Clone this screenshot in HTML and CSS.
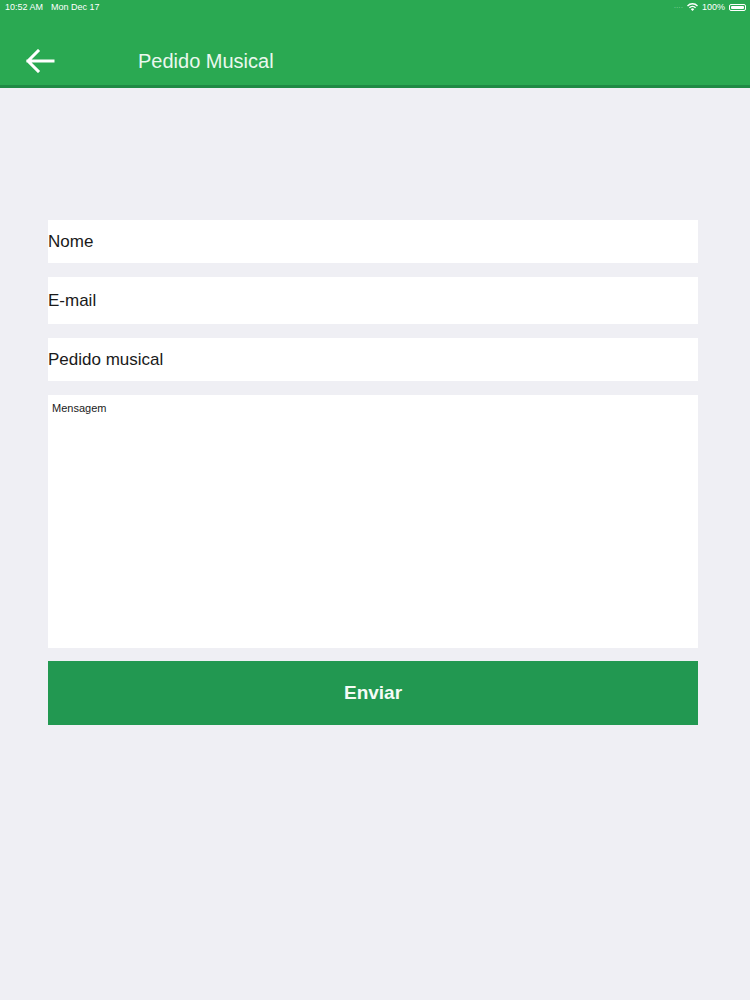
FILE: index.html
```html
<!DOCTYPE html>
<html lang="pt">
<head>
<meta charset="utf-8">
<title>Pedido Musical</title>
<link rel="stylesheet" href="styles.css">
</head>
<body>
<div class="app">
  <header class="header">
    <div class="status">
      <div class="status-left"><span>10:52 AM</span><span>Mon Dec 17</span></div>
      <div class="status-right">
        <span class="dots">····</span>
        <svg class="wifi" width="11" height="8" viewBox="0 0 11 8"><path d="M5.5 8 L3.8 6.2 A2.4 2.4 0 0 1 7.2 6.2 Z M1.9 4.3 A5 5 0 0 1 9.1 4.3 L8.1 5.3 A3.6 3.6 0 0 0 2.9 5.3 Z M0 2.4 A7.7 7.7 0 0 1 11 2.4 L10 3.4 A6.3 6.3 0 0 0 1 3.4 Z" fill="#fff"/></svg>
        <span>100%</span>
        <span class="battery"><span class="battery-fill"></span></span>
      </div>
    </div>
    <div class="nav">
      <svg class="back" width="30" height="24" viewBox="0 0 30 24"><path d="M28 12 H3 M13 2 L3 12 L13 22" fill="none" stroke="#fff" stroke-width="3" stroke-linecap="square"/></svg>
      <h1 class="title">Pedido Musical</h1>
    </div>
  </header>
  <main class="form">
    <div class="field f-nome">Nome</div>
    <div class="field f-email">E-mail</div>
    <div class="field f-pedido">Pedido musical</div>
    <div class="textarea">Mensagem</div>
    <button class="submit">Enviar</button>
  </main>
</div>
</body>
</html>
```
FILE: styles.css
```css
* { box-sizing: border-box; }
html, body { margin: 0; padding: 0; }
body {
  width: 750px;
  height: 1000px;
  background: #efeff4;
  font-family: "Liberation Sans", Arial, sans-serif;
  overflow: hidden;
}
.header {
  background: #2aa952;
  height: 88px;
  border-bottom: 3px solid #1f8a45;
  display: flex;
  flex-direction: column;
}
.status {
  height: 14px;
  display: flex;
  justify-content: space-between;
  align-items: center;
  padding: 0 4px 0 5px;
  color: #fff;
  font-size: 9px;
}
.status-left { display: flex; gap: 8px; }
.status-right { display: flex; align-items: center; gap: 4px; }
.dots { color: #8fd6a5; font-size: 7px; }
.battery {
  width: 17px;
  height: 7px;
  border: 1px solid #fff;
  border-radius: 2px;
  padding: 1px;
  display: flex;
}
.battery-fill { flex: 1; background: #fff; border-radius: 1px; }
.nav {
  flex: 1;
  display: flex;
  align-items: center;
  padding: 23px 0 0 25px;
}
.back { display: block; }
.title {
  margin: 0 0 0 83px;
  font-weight: normal;
  font-size: 20px;
  color: #eaf8ee;
}
.form {
  padding: 132px 52px 0 48px;
  display: flex;
  flex-direction: column;
}
.field {
  background: #fff;
  height: 43px;
  display: flex;
  align-items: center;
  font-size: 17px;
  color: #1a1a1a;
  margin-bottom: 14px;
}
.f-email { height: 47px; }
.textarea {
  background: #fff;
  height: 253px;
  font-size: 11px;
  color: #1a1a1a;
  padding: 7px 4px;
  margin-bottom: 13px;
}
.submit {
  height: 64px;
  border: 0;
  background: #229851;
  color: #f4fbf6;
  font-family: inherit;
  font-weight: bold;
  font-size: 19px;
  padding: 0;
}
```
